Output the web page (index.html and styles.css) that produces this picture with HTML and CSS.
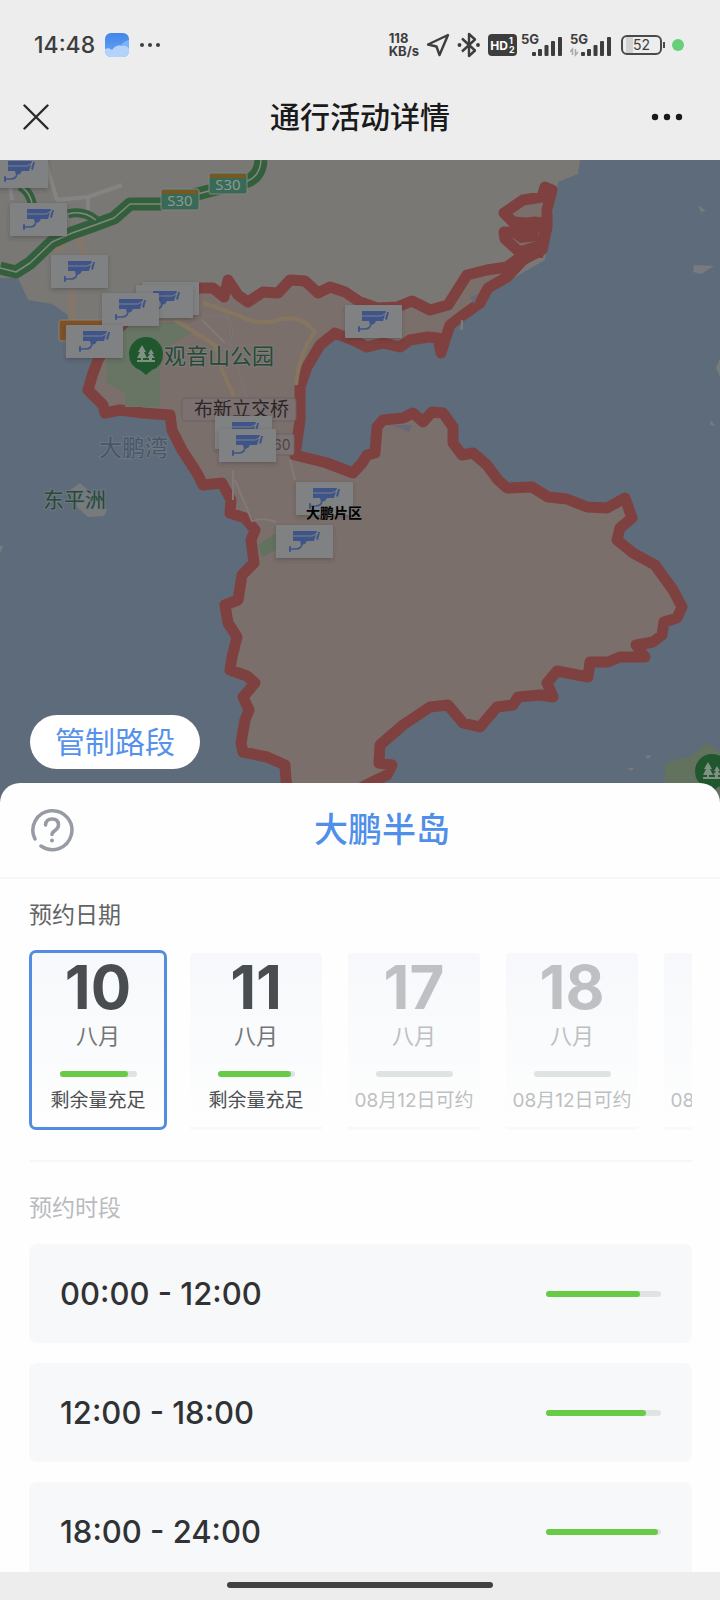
FILE: index.html
```html
<!DOCTYPE html>
<html lang="zh-CN">
<head>
<meta charset="utf-8">
<meta name="viewport" content="width=device-width, initial-scale=1">
<title>通行活动详情</title>
<link rel="stylesheet" href="styles.css">
</head>
<body>
<div class="app">
  <div class="status-bar">
    <div class="status-left">
      <span class="clock">14:48</span>
      <svg class="weather" viewBox="0 0 24 24" width="24" height="24">
        <defs>
          <linearGradient id="sky" x1="0" y1="0" x2="0" y2="1"><stop offset="0" stop-color="#4385ea"/><stop offset="1" stop-color="#67a7f4"/></linearGradient>
          <clipPath id="app-shape"><rect width="24" height="24" rx="6"/></clipPath>
        </defs>
        <g clip-path="url(#app-shape)">
          <rect width="24" height="24" fill="url(#sky)"/>
          <path d="M24 7Q19 8 16 12Q12 12 8 16L24 20z" fill="#7db3f5"/>
          <path d="M0 16Q4 14 7 17Q11 11 17 13Q22 12 24 16V24H0z" fill="#b3d3fa"/>
        </g>
      </svg>
      <svg viewBox="0 0 22 6" width="22" height="6" fill="#3d3d3d"><circle cx="3" cy="3" r="2"/><circle cx="11" cy="3" r="2"/><circle cx="19" cy="3" r="2"/></svg>
    </div>
    <div class="status-right">
      <span class="speed"><span>118</span><span>KB/s</span></span>
      <svg viewBox="0 0 24 24" width="24" height="24" fill="none" stroke="#3d3d3d" stroke-width="2.4" stroke-linejoin="round"><path d="M22 2L2 11.500L10.500 13.500L13.500 22z"/></svg>
      <svg viewBox="0 0 24 26" width="24" height="26" fill="none" stroke="#3d3d3d" stroke-width="2.400" stroke-linejoin="round"><path d="M5 6.500L18 18.500L12 24V2L18 7.500L5 19.500"/><circle cx="2.500" cy="13" r="1.200" fill="#3d3d3d" stroke-width="1.500"/><circle cx="21" cy="13" r="1.200" fill="#3d3d3d" stroke-width="1.500"/></svg>
      <span class="hd"><b>HD</b><span class="hd-sims"><i>1</i><i>2</i></span></span>
      <span class="signal">
        <svg viewBox="0 0 42 26" width="42" height="26"><text x="0" y="12" class="net">5G</text><g fill="#3d3d3d"><rect x="11" y="20" width="4" height="4" rx="1"/><rect x="17" y="17" width="4" height="7" rx="1"/><rect x="23.500" y="13" width="4" height="11" rx="1"/><rect x="30" y="9" width="4" height="15" rx="1"/><rect x="37" y="5" width="4" height="19" rx="1"/></g></svg>
      </span>
      <span class="signal">
        <svg viewBox="0 0 42 26" width="42" height="26"><text x="0" y="12" class="net">5G</text><path d="M2.500 23V17L0 20M5.500 17V23L8 20" fill="none" stroke="#aaa" stroke-width="1.500"/><g fill="#3d3d3d"><rect x="11" y="20" width="4" height="4" rx="1"/><rect x="17" y="17" width="4" height="7" rx="1"/><rect x="23.500" y="13" width="4" height="11" rx="1"/><rect x="30" y="9" width="4" height="15" rx="1"/><rect x="37" y="5" width="4" height="19" rx="1"/></g></svg>
      </span>
      <span class="battery">52</span>
      <span class="dot"></span>
    </div>
  </div>

  <header class="nav">
    <button class="icon-button" aria-label="关闭"><svg viewBox="0 0 26 26" width="26" height="26" stroke="#2a2a2a" stroke-width="2.400" stroke-linecap="round"><path d="M1.500 1.500L24.500 24.500M24.500 1.500L1.500 24.500"/></svg></button>
    <h1>通行活动详情</h1>
    <button class="icon-button more" aria-label="更多"><svg viewBox="0 0 32 8" width="32" height="8" fill="#1a1a1a"><circle cx="4" cy="4" r="3.200"/><circle cx="16" cy="4" r="3.200"/><circle cx="28" cy="4" r="3.200"/></svg></button>
  </header>

  <section class="map">
    <svg class="map-canvas" viewBox="0 160 720 644" role="img" aria-label="大鹏半岛管制区域地图">
      <defs>
        <g id="camera">
          <rect width="57" height="33" rx="1" fill="#808182" filter="url(#shade)"/>
          <g fill="#3f5488">
            <path d="M17 6H41L38 16H17z"/>
            <path d="M40 14L42 7L44 7L42 15z"/>
            <path d="M24 16H31L29 19L25 20z"/>
            <rect x="13" y="21" width="2" height="6" rx="1"/>
          </g>
          <path d="M15 24H20Q25 24 26 19" fill="none" stroke="#3f5488" stroke-width="1.500"/>
          <path d="M17 11H36L42 8" fill="none" stroke="#808182" stroke-width="1"/>
        </g>
        <g id="park">
          <path d="M0 20L-6 15Q-17 11 -17 -1A17 17 0 0 1 17 -1Q17 11 6 15z" fill="#21572f"/>
          <path d="M-4 -10L0 -3H-2L1 3H-3V5H3V3H1L4 -1H2L5 -6L8 -1H6L9 3H6V5H9V7H-9V5H-5V3H-9L-6 -3H-8z" fill="#7f9183"/>
        </g>
        <filter id="shade" x="-20%" y="-20%" width="140%" height="160%"><feDropShadow dx="0" dy="2" stdDeviation="2" flood-color="#333" flood-opacity=".3"/></filter>
      </defs>

      <rect y="160" width="720" height="644" fill="#5e6b7a"/>
      <path d="M0 160H580L578 174L558 182L545 260L440 320H360L300 320V460L170 415L90 390L98 345L70 340L68 315L52 304L28 300L18 278H0z" fill="#7a7875"/>

      <g fill="none" stroke-linejoin="round">
        <path d="M45 160L57 200L88 197L122 185M88 197V210M10 185L12 200" stroke="#858484" stroke-width="4"/>
        <path d="M78 235L86 260M55 250L65 245M72 290V320" stroke="#84776a" stroke-width="7"/>
        <path d="M0 268L16 272L30 263L52 242L72 233L95 225L114 218L130 204L160 204L205 192L240 183Q260 180 261 160" stroke="#345f3d" stroke-width="13"/>
        <path d="M20 186Q31 192 33 208M68 214Q83 210 96 220" stroke="#345f3d" stroke-width="9"/>
        <path d="M0 268L16 272L30 263L52 242L72 233L95 225L114 218L130 204L160 204L205 192L240 183Q260 180 261 160M20 186Q31 192 33 208M68 214Q83 210 96 220" stroke="#7d8b7e" stroke-width="1.500"/>
      </g>

      <path class="zone" d="M200 288L213 288L224 297L228 280L238 295L248 302L263 292L278 293L290 280L305 281L318 293L330 287L345 292L360 302L377 308L397 307L412 301L430 310L448 305L467 275L487 270L507 267L523 255L505 239L504 232L517 232L530 235L535 222L527 223L513 222L504 213L523 200L542 197L545 187L552 190L547 210L547 227L542 250L523 260L507 277L488 288L480 303L463 315L450 325L445 340L441 353L438 338L428 337L410 340L400 347L383 343L367 347L357 342L335 333L320 345L307 367L300 387L300 420L295 455L327 463L353 473L362 463L367 455L375 453L377 427L383 420L403 418L413 413L423 422L432 412L443 413L453 427L453 443L462 455L473 453L487 465L498 480L507 488L532 487L548 497L567 499L587 507L607 508L625 498L632 518L620 528L617 540L633 553L655 565L673 590L682 607L677 618L664 622L662 635L653 642L636 645L645 657L620 657L608 662L590 662L588 677L557 671L547 683L553 697L540 695L518 697L513 705L497 707L480 727L463 723L448 705L430 707L403 725L380 745L379 763L392 765L387 775L370 783L330 804H290L286 780L285 765L267 757L243 752L241 743L245 720L249 710L243 697L255 683L247 676L230 670L232 657L237 637L228 623L225 605L238 600L242 575L254 563L251 540L255 530L245 518L230 513L231 500L222 483L203 485L197 473L182 450L172 430L170 415L143 413L120 410L105 413L103 405L88 390L93 373L98 360L110 340L140 325L170 300z"/>
      <path d="M108 345L130 325L182 322L192 332L163 350L160 375L160 407H125V393L106 383z" fill="#687564"/>
      <path d="M507 234L520 243L540 241L536 224L524 228L512 226z" fill="#7f4140"/>
      <path d="M535 217H549L543 258L525 258L520 246L540 240z" fill="#7f4140"/>
      <g fill="none">
        <path d="M203 303Q225 310 242 317Q257 325 274 321Q300 312 315 332Q300 350 296 385M175 320L215 345L222 370L234 396" stroke="#86765f" stroke-width="4"/>
        <path d="M198 318L225 315Q235 325 230 342L242 380L247 400M202 320L225 343M233 470V500M290 460L295 480M235 480L252 521Q265 517 276 522" stroke="#827979" stroke-width="2"/>
        <path d="M198 318L225 315Q235 325 230 342L242 380L247 400" stroke="#756c6e" stroke-width="1"/>
      </g>
      <path d="M390 425H412L409 432L402 429zM470 297L478 294L474 304z" fill="#66697a"/>
      <path d="M258 545L276 533V550L262 557zM665 763L692 755L707 743L720 752V804H665z" fill="#63715f"/>
      <path d="M70 490L80 483L100 500L107 510L104 516L88 517L78 508zM694 265L714 266L701 274L693 272zM698 205L706 211L701 212zM720 358L716 368L720 377zM711 420L715 426L710 425zM461 320H463V330H460zM0 545L3 547L0 553zM645 756L652 755L648 759zM628 768L634 768L631 771z" fill="#777b7e"/>

      <g class="road-sign">
        <rect x="161" y="189" width="38" height="21" rx="2"/><path d="M162 194V190H198V194z"/><text x="180" y="206">S30</text>
        <rect x="209" y="173" width="38" height="21" rx="2"/><path d="M210 178V174H246V178z"/><text x="228" y="190">S30</text>
      </g>
      <rect x="59" y="320" width="45" height="21" rx="2" fill="#7f5226" stroke="#8b8172"/>

      <rect x="182" y="398" width="114" height="23" rx="3" fill="#7c7170" stroke="#6b6364"/>
      <text class="label bridge" x="194" y="416">布新立交桥</text>
      <rect x="260" y="434" width="34" height="21" rx="2" fill="#7c7474" stroke="#6b6364"/>
      <text class="label route" x="273" y="450">60</text>

      <use href="#park" x="146" y="355"/>
      <text class="label forest" x="164" y="364">观音山公园</text>
      <text class="label bay" x="99" y="456">大鹏湾</text>
      <text class="label isle" x="43" y="507">东平洲</text>
      <use href="#park" x="712" y="772"/>

      <use href="#camera" x="-9" y="155"/>
      <use href="#camera" x="10" y="203"/>
      <use href="#camera" x="51" y="255"/>
      <use href="#camera" x="142" y="282"/>
      <use href="#camera" x="136" y="285"/>
      <use href="#camera" x="102" y="293"/>
      <use href="#camera" x="66" y="325"/>
      <use href="#camera" x="345" y="305"/>
      <use href="#camera" x="215" y="416"/>
      <use href="#camera" x="219" y="429"/>
      <use href="#camera" x="296" y="482"/>
      <use href="#camera" x="276" y="525"/>
      <text class="label area" x="306" y="518">大鹏片区</text>
    </svg>
    <button class="road-button">管制路段</button>
  </section>

  <main class="sheet">
    <div class="sheet-head">
      <button class="help" aria-label="帮助"><svg viewBox="0 0 44 44" width="44" height="44" fill="none" stroke="#979ba6" stroke-width="3.500" stroke-linecap="round"><path d="M5 31A19.500 19.500 0 1 1 11 38"/><path d="M15.500 17Q16 11 22 11Q28.500 11 28.500 17Q28.500 20 25 22.500Q22 24.500 22 26.500"/><circle cx="22" cy="32.500" r="2" fill="#979ba6" stroke="none"/></svg></button>
      <h2>大鹏半岛</h2>
    </div>

    <div class="sheet-body">
      <section class="dates">
        <h3 class="section-title">预约日期</h3>
        <div class="date-list">
          <button class="date selected"><span class="day">10</span><span class="month">八月</span><span class="bar"><span style="width:89%"></span></span><span class="note">剩余量充足</span></button>
          <button class="date"><span class="day">11</span><span class="month">八月</span><span class="bar"><span style="width:95%"></span></span><span class="note">剩余量充足</span></button>
          <button class="date disabled" disabled><span class="day">17</span><span class="month">八月</span><span class="bar"></span><span class="note">08月12日可约</span></button>
          <button class="date disabled" disabled><span class="day">18</span><span class="month">八月</span><span class="bar"></span><span class="note">08月12日可约</span></button>
          <button class="date disabled" disabled><span class="day">24</span><span class="month">八月</span><span class="bar"></span><span class="note">08月12日可约</span></button>
        </div>
      </section>

      <section class="slots">
        <h3 class="section-title muted">预约时段</h3>
        <button class="slot"><span>00:00 - 12:00</span><span class="bar"><span style="width:82%"></span></span></button>
        <button class="slot"><span>12:00 - 18:00</span><span class="bar"><span style="width:87%"></span></span></button>
        <button class="slot"><span>18:00 - 24:00</span><span class="bar"><span style="width:97%"></span></span></button>
      </section>
    </div>
  </main>

  <div class="home-bar"><span></span></div>
</div>
</body>
</html>
```
FILE: styles.css
```css
* { box-sizing: border-box; }

body {
  margin: 0;
  background: #fff;
  color: #303234;
  font-family: Inter, "Noto Sans CJK SC", sans-serif;
}

h1, h2, h3 { margin: 0; }

button {
  margin: 0;
  padding: 0;
  border: 0;
  background: none;
  color: inherit;
  font: inherit;
}

svg { display: block; }

.app {
  display: flex;
  flex-direction: column;
  height: 100vh;
  overflow: hidden;
}

/* status bar */
.status-bar {
  display: flex;
  flex: none;
  align-items: center;
  justify-content: space-between;
  height: 74px;
  padding: 16px 36px 0 34px;
  background: #ededed;
  color: #3d3d3d;
}

.status-left, .status-right { display: flex; align-items: center; }
.status-left { gap: 10px; }
.status-right { gap: 7px; }
.clock { font-size: 23px; font-weight: 500; }

.speed {
  display: flex;
  flex-direction: column;
  font-size: 13px;
  font-weight: 700;
  line-height: 13px;
}

.hd {
  display: flex;
  align-items: center;
  justify-content: center;
  gap: 1px;
  width: 29px;
  height: 22px;
  border-radius: 4px;
  background: #3d3d3d;
  color: #fff;
  font-size: 12px;
}

.hd-sims {
  display: flex;
  flex-direction: column;
  font-size: 9px;
  font-weight: 700;
  line-height: 9px;
}

.hd-sims i { font-style: normal; }
.hd + .signal { margin-left: -3px; }
.net { fill: #3d3d3d; font-size: 13px; font-weight: 700; }

.battery {
  position: relative;
  width: 41px;
  height: 20px;
  margin-left: 2px;
  border: 2px solid #4a4a4a;
  border-radius: 6px;
  background: linear-gradient(90deg, transparent 3px, #d2d2d2 3px, #d2d2d2 10px, transparent 10px);
  font-size: 14px;
  line-height: 16px;
  text-align: center;
}

.battery::after {
  content: "";
  position: absolute;
  top: 5px;
  right: -5px;
  width: 2px;
  height: 6px;
  background: #4a4a4a;
}

.dot {
  width: 12px;
  height: 12px;
  margin-left: 3px;
  border-radius: 50%;
  background: #67cf76;
}

/* navigation */
.nav {
  display: grid;
  flex: none;
  grid-template-columns: 60px 1fr 60px;
  align-items: center;
  height: 86px;
  padding: 0 23px;
  background: #ededed;
}

.nav h1 {
  color: #1a1a1a;
  font-size: 30px;
  font-weight: 500;
  line-height: 40px;
  text-align: center;
}

.more { justify-self: center; }

/* map */
.map { position: relative; flex: none; }
.map-canvas { width: 100%; height: auto; }
.zone { fill: #7b6f6b; stroke: #7f4140; stroke-width: 11px; stroke-linejoin: round; }
.road-sign rect { fill: #396957; stroke: #81877a; }
.road-sign path { fill: #775724; }
.road-sign text { fill: #8c9992; font-family: "Noto Sans", sans-serif; font-size: 15px; text-anchor: middle; }
.label { paint-order: stroke; stroke: #7d7d7b; stroke-width: 2px; }
.bridge { fill: #292629; font-size: 19px; stroke: none; }
.route { fill: #4b4647; font-size: 14px; stroke: none; }
.forest { fill: #294936; font-size: 22px; }
.bay { fill: #48566a; font-size: 23px; stroke: #6e7882; }
.isle { fill: #294936; font-size: 21px; stroke: #6e7882; }
.area { fill: #000; font-size: 14px; font-weight: 700; stroke: #777; stroke-width: 1px; }

.road-button {
  position: absolute;
  bottom: 35px;
  left: 30px;
  padding: 7px 25px;
  border-radius: 27px;
  background: #fff;
  color: #5692ec;
  font-size: 30px;
  line-height: 40px;
}

/* booking sheet */
.sheet {
  position: relative;
  display: flex;
  flex: 1;
  flex-direction: column;
  min-height: 0;
  margin-top: -21px;
  border-radius: 20px 20px 0 0;
  background: #fefefe;
}

.sheet-head {
  display: grid;
  flex: none;
  grid-template-columns: 44px 1fr;
  align-items: center;
  height: 96px;
  padding: 0 30px;
  border-bottom: 2px solid #f6f7f8;
}

.sheet-head h2 {
  color: #4f8ee9;
  font-size: 34px;
  font-weight: 500;
  line-height: 44px;
  text-align: center;
}

.sheet-body {
  flex: 1;
  min-height: 0;
  padding: 20px 28px 0 29px;
  overflow: auto;
  scrollbar-width: none;
}

.section-title {
  color: #626466;
  font-size: 23px;
  font-weight: 400;
  line-height: 32px;
}

.section-title.muted { margin-bottom: 20px; color: #b9bbbe; }

.dates { padding-bottom: 30px; border-bottom: 2px solid #f5f6f7; }

.date-list {
  display: flex;
  gap: 20px;
  margin-top: 19px;
  overflow: auto;
  scrollbar-width: none;
}

.date {
  display: flex;
  flex: none;
  flex-direction: column;
  align-items: center;
  width: 138px;
  height: 180px;
  padding-top: 4px;
  border: 3px solid transparent;
  border-bottom-color: #f8f9fa;
  border-radius: 7px;
  background: linear-gradient(#f6f8fb, #fefefe) padding-box;
}

.date.selected { border-color: #528de2; }
.date .day { color: #4a4d50; font-size: 60px; font-weight: 700; line-height: 60px; }
.date .month { margin-top: 4px; color: #737577; font-size: 22px; line-height: 30px; }
.date .bar { width: 77px; margin-top: 20px; }
.date .note { margin-top: 10px; color: #4c4e50; font-size: 19px; line-height: 28px; white-space: nowrap; }
.date.disabled .day { color: #bfc0c3; }
.date.disabled .month, .date.disabled .note { color: #bdbfc1; }

.bar {
  display: flex;
  height: 6px;
  border-radius: 3px;
  background: #e0e3e4;
}

.bar span { border-radius: 3px; background: #68cb46; }

.slots { display: flex; flex-direction: column; padding-top: 30px; }

.slot {
  display: flex;
  flex: none;
  align-items: center;
  justify-content: space-between;
  height: 99px;
  margin-bottom: 20px;
  padding: 0 31px;
  border-radius: 8px;
  background: #f7f8fa;
  font-size: 31px;
  font-weight: 500;
}

.slot .bar { width: 115px; }

.home-bar {
  display: flex;
  flex: none;
  align-items: center;
  justify-content: center;
  height: 28px;
  padding-bottom: 2px;
  background: #ededed;
}

.home-bar span { width: 37%; height: 6px; border-radius: 3px; background: #424242; }
```
